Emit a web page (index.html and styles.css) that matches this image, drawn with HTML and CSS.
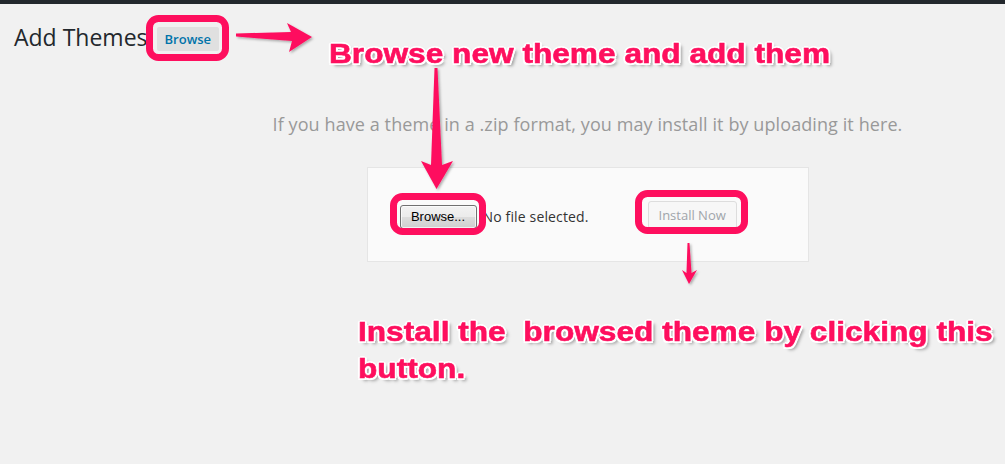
FILE: index.html
```html
<!DOCTYPE html>
<html lang="en">
<head>
<meta charset="utf-8">
<title>Add Themes</title>
<link rel="stylesheet" href="styles.css">
</head>
<body>
<div class="page">
  <div class="topbar"></div>
  <div class="wrap">
    <div class="title-row">
      <h1 class="title">Add Themes</h1>
      <a class="title-action">Browse</a>
    </div>
    <div class="upload-theme">
      <p class="install-help">If you have a theme in a .zip format, you may install it by uploading it here.</p>
      <form class="upload-form">
        <div class="file-field">
          <span class="file-btn">Browse...</span>
          <span class="file-label">No file selected.</span>
        </div>
        <span class="install-btn">Install Now</span>
      </form>
    </div>
  </div>

  <svg class="overlay" width="1005" height="464" viewBox="0 0 1005 464">
    <defs>
      <filter id="sh" x="-20%" y="-20%" width="140%" height="140%">
        <feDropShadow dx="1.5" dy="1.5" stdDeviation="1.2" flood-color="#000" flood-opacity="0.3"/>
      </filter>
    </defs>
    <g fill="none" stroke="#fe0f5e" stroke-width="7">
      <rect x="149.5" y="18.5" width="76" height="39" rx="9"/>
      <rect x="393.5" y="196.5" width="89" height="35" rx="9"/>
      <rect x="638.5" y="193.5" width="106" height="37" rx="9"/>
    </g>
    <g fill="#fe0f5e" filter="url(#sh)">
      <polygon points="236,33.5 291,32 287,23 312,37 289,52 292,41 236,36.5"/>
      <polygon points="434.5,68 437.5,68 442,165 453,161 436.5,189 421,161 431,165"/>
      <polygon points="687.5,243 689.5,243 691.5,273 697,270 689,284 682,270 686.5,273"/>
    </g>
  </svg>

  <div class="callout callout-top">Browse new theme and add them</div>
  <div class="callout callout-bottom">Install the&nbsp; browsed theme by clicking this<br>button.</div>
</div>
</body>
</html>
```

FILE: styles.css
```css
* { box-sizing: border-box; }

html, body {
  margin: 0;
  padding: 0;
  background: #f1f1f1;
}

.page {
  position: relative;
  width: 1005px;
  height: 464px;
  overflow: hidden;
  background: #f1f1f1;
  font-family: "Open Sans", "Liberation Sans", sans-serif;
}

.topbar {
  height: 4px;
  background: #23282d;
}

.wrap {
  padding-left: 14px;
}

.title-row {
  display: flex;
  align-items: flex-start;
  margin-top: 19px;
}

.title {
  margin: 0;
  font-size: 23px;
  font-weight: 400;
  line-height: 29px;
  color: #23282d;
}

.title-action {
  margin: 4px 0 0 9px;
  padding: 4px 8px;
  font-size: 13px;
  font-weight: 600;
  line-height: 16px;
  color: #0073aa;
  background: #e0e0e0;
  border-radius: 2px;
}

.upload-theme {
  margin-left: 156px;
  text-align: center;
}

.install-help {
  margin: 60px 0 0;
  font-size: 18px;
  letter-spacing: 0.09px;
  line-height: 25px;
  color: #999;
}

.upload-form {
  display: inline-flex;
  align-items: center;
  margin-top: 30px;
  width: 442px;
  height: 95px;
  padding: 30px;
  background: #fafafa;
  border: 1px solid #e5e5e5;
  text-align: left;
}

.file-field {
  display: flex;
  align-items: center;
  width: 250px;
  flex: none;
  margin-top: 4px;
}

.file-btn {
  display: inline-block;
  width: 77px;
  height: 24px;
  margin-left: 2px;
  border: 1px solid #707070;
  border-radius: 3px;
  background: linear-gradient(#f2f2f2, #ebebeb 50%, #dddddd 50%, #cfcfcf);
  box-shadow: inset 0 0 0 1px rgba(255,255,255,0.7);
  font-family: "Liberation Sans", Arial, sans-serif;
  font-size: 13px;
  line-height: 22px;
  color: #000;
  text-align: center;
}

.file-label {
  margin-left: 6px;
  font-size: 14px;
  letter-spacing: 0.15px;
  color: #333;
}

.install-btn {
  display: inline-block;
  height: 28px;
  padding: 0 10px 1px;
  font-size: 13px;
  line-height: 26px;
  color: #a0a5aa;
  background: #f7f7f7;
  border: 1px solid #ddd;
  border-radius: 3px;
}

.overlay {
  position: absolute;
  top: 0;
  left: 0;
  pointer-events: none;
}

.callout {
  position: absolute;
  font-family: "Liberation Sans", Arial, sans-serif;
  font-weight: 700;
  font-size: 28px;
  line-height: 37px;
  color: #fe0f5e;
  white-space: nowrap;
  -webkit-text-stroke: 0.6px #fe0f5e;
  transform: scaleX(1.13);
  transform-origin: 0 0;
  text-shadow:
    2px 0 0 #fff, -2px 0 0 #fff, 0 2px 0 #fff, 0 -2px 0 #fff,
    1.5px 1.5px 0 #fff, -1.5px 1.5px 0 #fff, 1.5px -1.5px 0 #fff, -1.5px -1.5px 0 #fff,
    3px 3px 3px rgba(0,0,0,0.35);
}

.callout-top {
  left: 329px;
  top: 35px;
}

.callout-bottom {
  left: 358px;
  top: 313px;
}
```
